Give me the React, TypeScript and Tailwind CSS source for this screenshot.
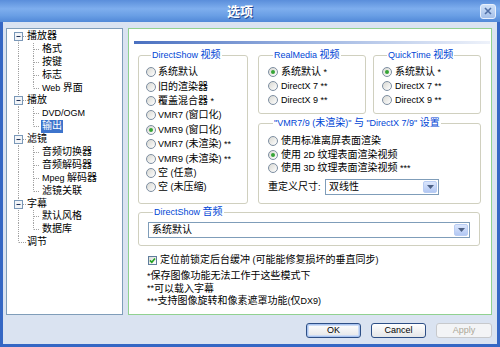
import React from "react";

const CJK = /[\u2E80-\u9FFF\uFF00-\uFFEF\u3000-\u303F]/;
const SPLIT = /([\u2E80-\u9FFF\uFF00-\uFFEF\u3000-\u303F]+)/;

function T({ s }: { s: string }) {
  return (
    <>
      {s
        .split(SPLIT)
        .filter(Boolean)
        .map((p, i) =>
          CJK.test(p) ? (
            <span key={i} className="text-[10px]">
              {p}
            </span>
          ) : (
            <span key={i}>{p}</span>
          )
        )}
    </>
  );
}

function Radio({ checked }: { checked?: boolean }) {
  return (
    <span className="flex h-[10px] w-[10px] shrink-0 items-center justify-center rounded-full border border-[#7d8ea1] bg-[linear-gradient(135deg,#d8d8d2,#ffffff)]">
      {checked && <span className="h-[4px] w-[4px] rounded-full bg-[#36a436]" />}
    </span>
  );
}

function RadioRow({
  label,
  checked,
  h,
  gap,
}: {
  label: string;
  checked?: boolean;
  h: string;
  gap: string;
}) {
  return (
    <div className={`flex items-center ${h} ${gap}`}>
      <Radio checked={checked} />
      <span className="whitespace-nowrap leading-none">
        <T s={label} />
      </span>
    </div>
  );
}

function Group({
  title,
  className,
  children,
}: {
  title: string;
  className: string;
  children?: React.ReactNode;
}) {
  return (
    <fieldset className={`min-w-0 rounded-[3px] border border-[#d0d0bf] ${className}`}>
      <legend className="ml-[5px] whitespace-nowrap px-[1px] leading-[12px] text-[#0046d5]">
        <T s={title} />
      </legend>
      {children}
    </fieldset>
  );
}

function Select({ value, className }: { value: string; className: string }) {
  return (
    <div className={`flex h-[16px] items-center border border-[#7f9db9] bg-white ${className}`}>
      <span className="flex-1 pl-[3px] leading-none">
        <T s={value} />
      </span>
      <span className="m-[1px] flex h-[12px] w-[14px] items-center justify-center rounded-[2px] border border-[#b9cdf3] bg-[linear-gradient(#dbe6fc,#b3c8f3)]">
        <svg width="7" height="4" viewBox="0 0 7 4">
          <path d="M0 0h7L3.5 4z" fill="#4d6185" />
        </svg>
      </span>
    </div>
  );
}

type TreeRow = {
  label: string;
  level: 0 | 1;
  expander?: boolean;
  selected?: boolean;
  root: "first" | "mid" | "last";
  child?: "mid" | "last";
};

const treeRows: TreeRow[] = [
  { label: "播放器", level: 0, expander: true, root: "first" },
  { label: "格式", level: 1, root: "mid", child: "mid" },
  { label: "按键", level: 1, root: "mid", child: "mid" },
  { label: "标志", level: 1, root: "mid", child: "mid" },
  { label: "Web 界面", level: 1, root: "mid", child: "last" },
  { label: "播放", level: 0, expander: true, root: "mid" },
  { label: "DVD/OGM", level: 1, root: "mid", child: "mid" },
  { label: "输出", level: 1, root: "mid", child: "last", selected: true },
  { label: "滤镜", level: 0, expander: true, root: "mid" },
  { label: "音频切换器", level: 1, root: "mid", child: "mid" },
  { label: "音频解码器", level: 1, root: "mid", child: "mid" },
  { label: "Mpeg 解码器", level: 1, root: "mid", child: "mid" },
  { label: "滤镜关联", level: 1, root: "mid", child: "last" },
  { label: "字幕", level: 0, expander: true, root: "mid" },
  { label: "默认风格", level: 1, root: "mid", child: "mid" },
  { label: "数据库", level: 1, root: "mid", child: "last" },
  { label: "调节", level: 0, root: "last" },
];

const RH = 12.9;
const CY = RH / 2;

function TreeLines({ row }: { row: TreeRow }) {
  const w = row.level === 0 ? 19 : 34;
  const dot = { stroke: "#a0a0a0", strokeWidth: 1, strokeDasharray: "1 1" };
  const rootY1 = row.root === "first" ? CY : 0;
  const rootY2 = row.root === "last" ? CY : RH;
  return (
    <svg width={w} height={RH} viewBox={`0 0 ${w} ${RH}`} className="shrink-0">
      <line x1={11.5} y1={rootY1} x2={11.5} y2={rootY2} {...dot} />
      {row.level === 0 && <line x1={12} y1={6.5} x2={19} y2={6.5} {...dot} />}
      {row.level === 1 && (
        <>
          <line x1={26.5} y1={0} x2={26.5} y2={row.child === "last" ? 6.5 : RH} {...dot} />
          <line x1={27} y1={6.5} x2={33} y2={6.5} {...dot} />
        </>
      )}
      {row.expander && (
        <>
          <rect x={7.5} y={2.5} width={8} height={8} fill="#f3f5f8" stroke="#7a98b8" />
          <line x1={9.5} y1={6.5} x2={13.5} y2={6.5} stroke="#1d2f55" strokeWidth={1} />
        </>
      )}
    </svg>
  );
}

function Tree() {
  return (
    <div className="w-[117px] shrink-0 border border-[#7f9db9] bg-white pt-[1px]">
      {treeRows.map((r, i) => (
        <div key={i} className="flex h-[12.9px] items-center">
          <TreeLines row={r} />
          <span
            className={`whitespace-nowrap px-[1px] leading-[12.9px] ${
              r.selected ? "bg-[#3d74cc] text-white" : "text-black"
            }`}
          >
            <T s={r.label} />
          </span>
        </div>
      ))}
    </div>
  );
}

function Panel() {
  const ds = [
    "系统默认",
    "旧的渲染器",
    "覆盖混合器 *",
    "VMR7 (窗口化)",
    "VMR9 (窗口化)",
    "VMR7 (未渲染) **",
    "VMR9 (未渲染) **",
    "空 (任意)",
    "空 (未压缩)",
  ];
  return (
    <div className="flex min-w-0 flex-1 flex-col border border-[#91d191] bg-white pt-[12px]">
      <div className="ml-[5px] mr-[1px] h-[3px] bg-[linear-gradient(to_right,#4a70c0,#9fb6e2,#eef2fa)]" />
      <div className="flex flex-col pl-[9px] pt-[5px]">
        <div className="flex gap-[10px]">
          <Group title="DirectShow 视频" className="h-[155px] w-[110px] pl-[7px] pt-[4px]">
            {ds.map((l, i) => (
              <RadioRow key={i} label={l} checked={i === 4} h="h-[14.4px]" gap="gap-[2px]" />
            ))}
          </Group>
          <div className="flex w-[223px] flex-col gap-[3px]">
            <div className="flex gap-[7px]">
              <Group title="RealMedia 视频" className="h-[65px] w-[108px] pl-[9px] pt-[4px]">
                <RadioRow label="系统默认 *" checked h="h-[14.2px]" gap="gap-[3px]" />
                <RadioRow label="DirectX 7 **" h="h-[14.2px]" gap="gap-[3px]" />
                <RadioRow label="DirectX 9 **" h="h-[14.2px]" gap="gap-[3px]" />
              </Group>
              <Group title="QuickTime 视频" className="h-[65px] w-[108px] pl-[8px] pt-[4px]">
                <RadioRow label="系统默认 *" checked h="h-[14.2px]" gap="gap-[3px]" />
                <RadioRow label="DirectX 7 **" h="h-[14.2px]" gap="gap-[3px]" />
                <RadioRow label="DirectX 9 **" h="h-[14.2px]" gap="gap-[3px]" />
              </Group>
            </div>
            <Group
              title={'"VMR7/9 (未渲染)" 与 "DirectX 7/9" 设置'}
              className="h-[87px] w-[223px] pl-[9px] pt-[5px]"
            >
              <RadioRow label="使用标准离屏表面渲染" h="h-[13.7px]" gap="gap-[3px]" />
              <RadioRow label="使用 2D 纹理表面渲染视频" checked h="h-[13.7px]" gap="gap-[3px]" />
              <RadioRow label="使用 3D 纹理表面渲染视频 ***" h="h-[13.7px]" gap="gap-[3px]" />
              <div className="mt-[4px] flex items-center">
                <span className="w-[57px] shrink-0 whitespace-nowrap leading-none">
                  <T s="重定义尺寸:" />
                </span>
                <Select value="双线性" className="w-[114px]" />
              </div>
            </Group>
          </div>
        </div>
        <Group title="DirectShow 音频" className="mt-[2px] h-[40px] w-[342px] pl-[9px] pt-[4px]">
          <Select value="系统默认" className="w-[322px]" />
        </Group>
        <div className="mt-[8px] flex h-[12px] items-center gap-[3px] pl-[10px]">
          <span className="flex h-[9px] w-[9px] shrink-0 items-center justify-center border border-[#5f7d9c] bg-[linear-gradient(135deg,#dcdcd6,#ffffff)]">
            <svg width="7" height="7" viewBox="0 0 7 7">
              <path d="M1 3.4l1.8 1.9L6 1.4" stroke="#21a121" strokeWidth="1.6" fill="none" />
            </svg>
          </span>
          <span className="whitespace-nowrap leading-none">
            <T s="定位前锁定后台缓冲 (可能能修复损坏的垂直同步)" />
          </span>
        </div>
        <div className="mt-[4px] flex flex-col pl-[9px]">
          {["* 保存图像功能无法工作于这些模式下", "** 可以载入字幕", "*** 支持图像旋转和像素遮罩功能 (仅 DX9)"].map(
            (l, i) => (
              <div key={i} className="flex h-[12.5px] items-center whitespace-nowrap leading-none">
                <T s={l} />
              </div>
            )
          )}
        </div>
      </div>
    </div>
  );
}

export default function App() {
  return (
    <div className="flex h-[347px] w-[500px] flex-col overflow-hidden bg-[#3567c4] font-['Liberation_Sans','Noto_Sans_CJK_SC',sans-serif] text-[9px] text-black">
      <div className="flex h-[22px] shrink-0 items-center bg-[linear-gradient(#5a8edb,#7eaeee_40%,#6a9fe5_70%,#5189d8)]">
        <div className="flex-1 text-center text-[13px] font-bold leading-none text-white [text-shadow:1px_1px_0_#23478f]">
          选项
        </div>
        <div className="mr-[4px] flex h-[15px] w-[16px] items-center justify-center rounded-[3px] border border-[#e8f0fc] bg-[linear-gradient(#cfe0f7,#a3c0ea)]">
          <svg width="8" height="8" viewBox="0 0 8 8">
            <path d="M1 1l6 6M7 1L1 7" stroke="#4f6fa6" strokeWidth="1.6" />
          </svg>
        </div>
      </div>
      <div className="mx-[3px] mb-[3px] flex flex-1 flex-col bg-[#dae3f1] pl-[3px] pr-[5px] pt-[6px]">
        <div className="flex h-[287px] gap-[5px]">
          <Tree />
          <Panel />
        </div>
        <div className="mt-[8px] flex justify-end gap-[10px]">
          <div className="flex h-[15px] w-[55px] items-center justify-center rounded-[3px] border border-[#2d4f86] bg-[linear-gradient(#ffffff,#e4e6e8)] leading-none shadow-[inset_0_0_0_1px_#a9c4f0,inset_0_0_0_2px_#cddcf5]">
            OK
          </div>
          <div className="flex h-[15px] w-[55px] items-center justify-center rounded-[3px] border border-[#2d4f86] bg-[linear-gradient(#ffffff,#e4e6e8)] leading-none">
            Cancel
          </div>
          <div className="flex h-[15px] w-[56px] items-center justify-center rounded-[3px] border border-[#c7c9cc] bg-[#f3f4f6] leading-none text-[#aca899]">
            Apply
          </div>
        </div>
      </div>
    </div>
  );
}
